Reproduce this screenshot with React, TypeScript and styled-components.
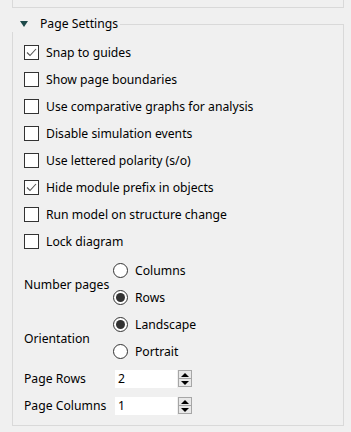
import styled, { createGlobalStyle } from "styled-components";

const GlobalStyle = createGlobalStyle`
  body {
    margin: 0;
    background: #f0f0f0;
    font-family: "Noto Sans", "Open Sans", sans-serif;
    font-size: 12.2px;
    color: #000;
  }
`;

const border = "#d9d9d9";

const Page = styled.div`
  width: 351px;
  height: 432px;
  overflow: hidden;
  padding-left: 12px;
  box-sizing: border-box;
`;

const TopPanel = styled.div`
  width: 332px;
  height: 8px;
  box-sizing: border-box;
  border: 1px solid ${border};
  border-top: none;
`;

const Header = styled.div`
  display: flex;
  width: 332px;
  height: 16px;
  margin-top: 8px;
`;

const Title = styled.div`
  display: flex;
  align-items: center;
  gap: 12px;
  padding-left: 8px;
  padding-right: 2px;
  line-height: 16px;
`;

const Arrow = styled.span`
  width: 0;
  height: 0;
  border-left: 4px solid transparent;
  border-right: 4px solid transparent;
  border-top: 6px solid #1d4a4a;
`;

const Rule = styled.div`
  flex: 1;
  margin-top: 8px;
  border-top: 1px solid ${border};
  border-right: 1px solid ${border};
`;

const Body = styled.div`
  width: 332px;
  box-sizing: border-box;
  border: 1px solid ${border};
  border-top: none;
  padding: 7px 0 6px 11px;
`;

const Row = styled.div`
  display: flex;
  align-items: center;
  gap: 7px;
  height: 27px;
`;

const Box = styled.span`
  width: 15px;
  height: 15px;
  box-sizing: border-box;
  border: 1px solid #333;
  background: #fff;
  display: flex;
  align-items: center;
  justify-content: center;
`;

const Form = styled.div`
  display: grid;
  grid-template-columns: 89px auto;
  align-items: center;
  margin-top: 2px;
`;

const Label = styled.div`
  white-space: nowrap;
`;

const Options = styled.div`
  display: flex;
  flex-direction: column;
`;

const Radio = styled.span<{ $on: boolean }>`
  width: 15px;
  height: 15px;
  box-sizing: border-box;
  border-radius: 50%;
  border: 1px solid #333;
  background: #fff;
  display: flex;
  align-items: center;
  justify-content: center;
  &::after {
    content: "";
    display: ${(p) => (p.$on ? "block" : "none")};
    width: 9px;
    height: 9px;
    border-radius: 50%;
    background: #333;
  }
`;

const SpinRow = styled.div`
  display: flex;
  align-items: center;
  height: 27px;
`;

const Spin = styled.div`
  display: flex;
  align-items: center;
  margin-left: 2px;
`;

const Field = styled.div`
  width: 62px;
  height: 18px;
  background: #fff;
  box-sizing: border-box;
  padding-left: 3px;
  line-height: 18px;
`;

const Buttons = styled.div`
  display: flex;
  flex-direction: column;
  margin-left: 1px;
  width: 14px;
  height: 17px;
  border: 1px solid #a6a6a6;
  box-sizing: border-box;
`;

const Step = styled.div<{ $up?: boolean }>`
  flex: 1;
  background: #e8e8e8;
  display: flex;
  align-items: center;
  justify-content: center;
  ${(p) => (p.$up ? "border-bottom: 1px solid #a6a6a6;" : "")}
  &::after {
    content: "";
    border-left: 4px solid transparent;
    border-right: 4px solid transparent;
    ${(p) => (p.$up ? "border-bottom" : "border-top")}: 4px solid #000;
  }
`;

const checks: [string, boolean][] = [
  ["Snap to guides", true],
  ["Show page boundaries", false],
  ["Use comparative graphs for analysis", false],
  ["Disable simulation events", false],
  ["Use lettered polarity (s/o)", false],
  ["Hide module prefix in objects", true],
  ["Run model on structure change", false],
  ["Lock diagram", false],
];

function Check({ on }: { on: boolean }) {
  return (
    <Box>
      {on && (
        <svg width="11" height="9" viewBox="0 0 11 9">
          <polyline points="1,4.5 4,7.5 10,1" fill="none" stroke="#555" strokeWidth="1.1" />
        </svg>
      )}
    </Box>
  );
}

function RadioGroup({ label, items, selected }: { label: string; items: string[]; selected: string }) {
  return (
    <>
      <Label>{label}</Label>
      <Options>
        {items.map((it) => (
          <Row key={it}>
            <Radio $on={it === selected} />
            {it}
          </Row>
        ))}
      </Options>
    </>
  );
}

function SpinBox({ label, value }: { label: string; value: number }) {
  return (
    <>
      <Label>{label}</Label>
      <SpinRow>
        <Spin>
          <Field>{value}</Field>
          <Buttons>
            <Step $up />
            <Step />
          </Buttons>
        </Spin>
      </SpinRow>
    </>
  );
}

export default function App() {
  return (
    <Page>
      <GlobalStyle />
      <TopPanel />
      <Header>
        <Title>
          <Arrow />
          Page Settings
        </Title>
        <Rule />
      </Header>
      <Body>
        {checks.map(([text, on]) => (
          <Row key={text}>
            <Check on={on} />
            {text}
          </Row>
        ))}
        <Form>
          <RadioGroup label="Number pages" items={["Columns", "Rows"]} selected="Rows" />
          <RadioGroup label="Orientation" items={["Landscape", "Portrait"]} selected="Landscape" />
          <SpinBox label="Page Rows" value={2} />
          <SpinBox label="Page Columns" value={1} />
        </Form>
      </Body>
    </Page>
  );
}
